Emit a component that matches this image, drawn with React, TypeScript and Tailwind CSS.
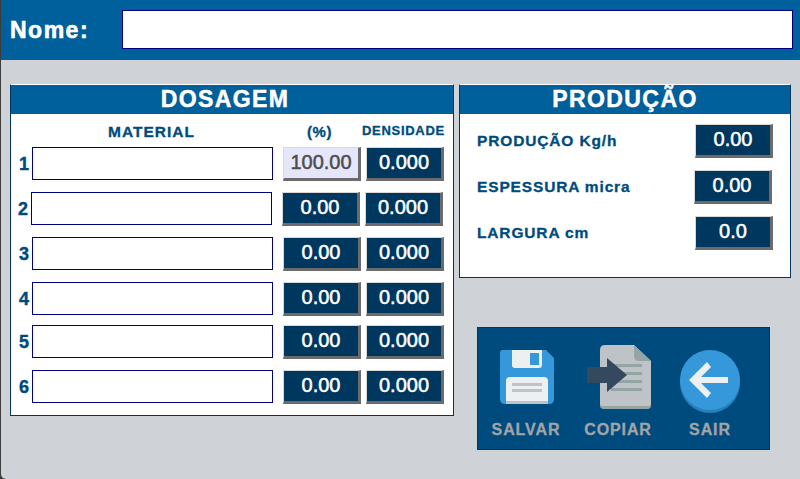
const font = "font-['Liberation_Sans',Arial,sans-serif]"

const dosagem = [
  { n: '1', box: 'mt-0 ml-[6px]', pct: '100.00', active: true },
  { n: '2', box: 'mt-[11px] ml-[5px]', pct: '0.00' },
  { n: '3', box: 'mt-[11px] ml-[6px]', pct: '0.00' },
  { n: '4', box: 'mt-[11px] ml-[6px]', pct: '0.00' },
  { n: '5', box: 'mt-[9px] ml-[6px]', pct: '0.00' },
  { n: '6', box: 'mt-[11px] ml-[6px]', pct: '0.00' },
]

const producao = [
  { label: 'PRODUÇÃO Kg/h', value: '0.00', width: 'w-[218px]' },
  { label: 'ESPESSURA micra', value: '0.00', width: 'w-[217px]' },
  { label: 'LARGURA cm', value: '0.0', width: 'w-[218px]' },
]

function ValueBox({ value, active = false, className = '' }: { value: string; active?: boolean; className?: string }) {
  return (
    <div
      className={`flex h-[34px] w-[78px] shrink-0 items-center justify-center border-t border-l border-t-[#d9d9d9] border-l-[#d9d9d9] border-r-[3px] border-b-[3px] border-r-[#6b6b6b] border-b-[#6b6b6b] pb-[2px] text-[20px] [-webkit-text-stroke:0.5px] ${
        active ? 'bg-[#e6e6fa] text-[#4d4d4d]' : 'bg-[#00375f] text-white'
      } ${className}`}
    >
      {value}
    </div>
  )
}

function PanelTitle({ children, className = '' }: { children: string; className?: string }) {
  return (
    <div
      className={`flex h-[29px] items-center justify-center bg-[#00609c] text-[23px] leading-none font-bold tracking-[1.4px] text-white [-webkit-text-stroke:0.5px] ${className}`}
    >
      {children}
    </div>
  )
}

function SaveIcon() {
  return (
    <svg width="54" height="54" viewBox="0 0 54 54">
      <path d="M3 0H46L54 8V49Q54 54 49 54H5Q0 54 0 49V3Q0 0 3 0Z" fill="#3498db" />
      <path d="M12 0H42V15Q42 18 39 18H15Q12 18 12 15Z" fill="#ecf0f1" />
      <rect x="30" y="3" width="9" height="12" fill="#3498db" />
      <path d="M10 27H44Q48 27 48 31V54H6V31Q6 27 10 27Z" fill="#ecf0f1" />
      <rect x="6" y="51" width="42" height="3" fill="#bdc3c7" />
      <rect x="12" y="33" width="30" height="3" fill="#bdc3c7" />
      <rect x="12" y="39" width="30" height="3" fill="#bdc3c7" />
    </svg>
  )
}

function CopyIcon() {
  return (
    <svg width="64" height="65" viewBox="0 0 64 65">
      <path d="M18 0H47L64 16V59Q64 64 59 64H18Q13 64 13 59V5Q13 0 18 0Z" fill="#bdc3c7" />
      <path d="M13 59V61Q13 64 18 64H59Q64 64 64 61V59Q64 61 59 61H18Q13 61 13 59Z" fill="#95a5a6" />
      <path d="M47 0L64 16H52Q47 16 47 11Z" fill="#95a5a6" />
      <rect x="24" y="19" width="31" height="3" fill="#95a5a6" />
      <rect x="24" y="27" width="31" height="3" fill="#95a5a6" />
      <rect x="24" y="35" width="31" height="3" fill="#95a5a6" />
      <rect x="24" y="43" width="31" height="3" fill="#95a5a6" />
      <path d="M0 22H20V13L40 30L20 47V38H0Z" fill="#34495e" />
    </svg>
  )
}

function ExitIcon() {
  return (
    <svg width="60" height="63" viewBox="0 0 60 63">
      <circle cx="30" cy="33" r="30" fill="#2980b9" />
      <circle cx="30" cy="30" r="30" fill="#3498db" />
      <path d="M48 27H21L31 17L27 12L9 30L27 48L31 43L21 33H48Z" fill="#ecf0f1" />
    </svg>
  )
}

function Action({ label, className, iconClass = '', children }: { label: string; className: string; iconClass?: string; children: React.ReactNode }) {
  return (
    <div className={`flex flex-col items-center ${className}`}>
      <div className={`flex h-[70px] items-start ${iconClass}`}>{children}</div>
      <span className="mt-[7px] text-[16px] leading-none font-bold tracking-[0.9px] whitespace-nowrap text-[#a0a4a8] [-webkit-text-stroke:0.3px]">
        {label}
      </span>
    </div>
  )
}

export default function App() {
  return (
    <div className="h-[479px] w-[800px] bg-[#3d3d3d] pl-px">
      <div className={`flex h-full flex-col overflow-hidden rounded-bl-[5px] bg-[#cfd3d7] ${font}`}>
        <header className="flex h-[60px] shrink-0 items-start bg-[#00609c] pt-[10px] pl-[9px]">
          <span className="mt-[9px] w-[112px] text-[23px] leading-none font-bold tracking-[1.5px] text-white [-webkit-text-stroke:0.6px]">
            Nome:
          </span>
          <div className="h-[39px] w-[671px] border border-[#00007f] bg-white" />
        </header>

        <main className="flex flex-1 items-start pt-[24px] pl-[9px]">
          <section className="h-[332px] w-[444px] border border-t-white border-r-[#00375f] border-b-[#00375f] border-l-[#00375f] bg-white">
            <PanelTitle className="pr-[14px]">DOSAGEM</PanelTitle>
            <div>
              <div className="flex h-[33px] items-start pt-[10px] font-bold whitespace-nowrap text-[#004b7d] [-webkit-text-stroke:0.3px]">
                <span className="ml-[97px] w-[199px] text-[15.5px] leading-none tracking-[1px]">MATERIAL</span>
                <span className="w-[55px] text-[15px] leading-none tracking-[0.6px]">(%)</span>
                <span className="text-[13px] leading-none tracking-[0.7px]">DENSIDADE</span>
              </div>
              {dosagem.map((row) => (
                <div key={row.n} className={`flex items-start ${row.box}`}>
                  <span className="w-[15px] pt-[8px] pl-[2px] text-[18px] leading-none font-bold text-[#004b7d] [-webkit-text-stroke:0.4px]">
                    {row.n}
                  </span>
                  <div className="h-[33px] w-[241px] shrink-0 border border-[#00007f] bg-white" />
                  <ValueBox value={row.pct} active={row.active} className="ml-[10px]" />
                  <ValueBox value="0.000" className="ml-[5px]" />
                </div>
              ))}
            </div>
          </section>

          <div className="ml-[5px] flex flex-col">
            <section className="h-[194px] w-[332px] border border-t-white border-r-[#00375f] border-b-[#00375f] border-l-[#00375f] bg-white">
              <PanelTitle>PRODUÇÃO</PanelTitle>
              <div className="flex flex-col gap-[12px] pt-[10px] pl-[17px]">
                {producao.map((row) => (
                  <div key={row.label} className="flex items-center">
                    <span className={`text-[15.5px] leading-none font-bold tracking-[0.85px] whitespace-nowrap text-[#004b7d] [-webkit-text-stroke:0.3px] ${row.width}`}>
                      {row.label}
                    </span>
                    <ValueBox value={row.value} />
                  </div>
                ))}
              </div>
            </section>

            <section className="mt-[49px] ml-[18px] flex h-[123px] w-[293px] items-start border border-[#003a63] bg-[#004b7d] pt-[17px]">
              <Action label="SALVAR" className="ml-[14px] w-[68px]" iconClass="pt-[5px] pl-[2px]">
                <SaveIcon />
              </Action>
              <Action label="COPIAR" className="ml-[25px] w-[66px]" iconClass="pl-[2px]">
                <CopyIcon />
              </Action>
              <Action label="SAIR" className="ml-[29px] w-[60px]" iconClass="pt-[5px]">
                <ExitIcon />
              </Action>
            </section>
          </div>
        </main>
      </div>
    </div>
  )
}
